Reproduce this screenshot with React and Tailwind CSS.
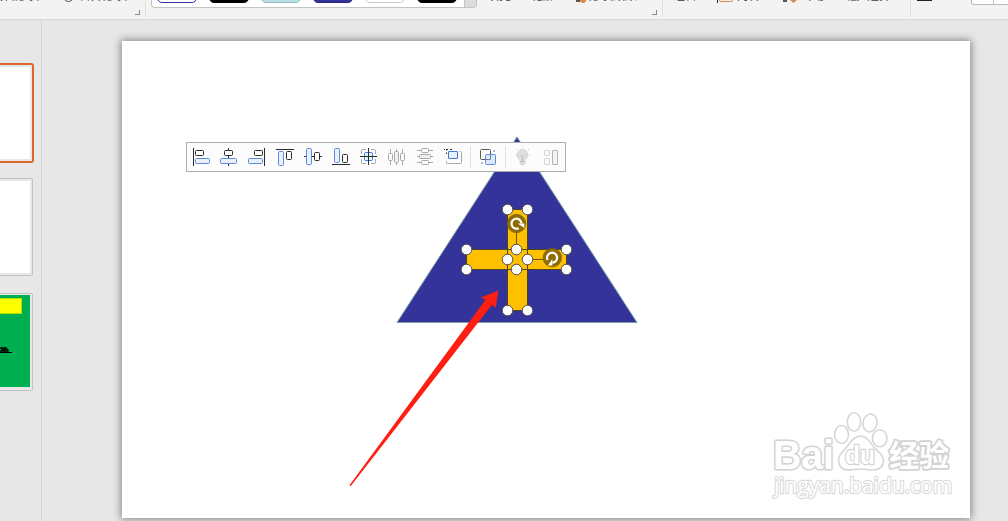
import React from 'react';
import { clsx } from 'clsx';

const DARK = '#2b2b2b';
const BLUE = '#5b8bd9';
const PALE = '#e8f0fb';
const GRAY = '#a8a8a8';

const swatches = [
  'bg-white border-[#333399]',
  'bg-black border-black',
  'bg-[#bbe0e3] border-[#94bcbf]',
  'bg-[#333399] border-[#262680]',
  'bg-white border-[#c8cac9]',
  'bg-black border-black',
];

const handles = [
  [507.5, 209.5], [527.5, 209.5],
  [466.5, 249.5], [566.5, 249.5],
  [466.5, 269.5], [566.5, 269.5],
  [507.5, 310.5], [527.5, 310.5],
  [516.5, 249.5], [516.5, 269.5],
  [507.5, 259.5], [527.5, 259.5],
];

// Rounded box given by its corner coordinates
function Box({ x1, y1, x2, y2, color = DARK, fill = 'none', r = 1 }) {
  return <rect x={x1} y={y1} width={x2 - x1} height={y2 - y1} rx={r} stroke={color} fill={fill} />;
}

const alignIcons = [
  {
    name: 'Align left',
    art: (
      <>
        <path d="M1.5 0v18" stroke={DARK} />
        <Box x1={3.5} y1={2.5} x2={11.5} y2={7.5} />
        <Box x1={3.5} y1={10.5} x2={17.5} y2={15.5} color={BLUE} fill={PALE} />
      </>
    ),
  },
  {
    name: 'Align center',
    art: (
      <>
        <path d="M8.5 0v2M8.5 8v2M8.5 16v2" stroke={DARK} />
        <Box x1={4.5} y1={2.5} x2={12.5} y2={7.5} />
        <Box x1={0.5} y1={10.5} x2={16.5} y2={15.5} color={BLUE} fill={PALE} />
      </>
    ),
  },
  {
    name: 'Align right',
    art: (
      <>
        <path d="M16.5 0v18" stroke={DARK} />
        <Box x1={6.5} y1={2.5} x2={14.5} y2={7.5} />
        <Box x1={0.5} y1={10.5} x2={14.5} y2={15.5} color={BLUE} fill={PALE} />
      </>
    ),
  },
  {
    name: 'Align top',
    art: (
      <>
        <path d="M0 1.5h18" stroke={DARK} />
        <Box x1={2.5} y1={3.5} x2={7.5} y2={17.5} color={BLUE} fill={PALE} />
        <Box x1={10.5} y1={3.5} x2={15.5} y2={11.5} />
      </>
    ),
  },
  {
    name: 'Align middle',
    art: (
      <>
        <path d="M0 8.5h2M8 8.5h2M16 8.5h2" stroke={DARK} />
        <Box x1={2.5} y1={0.5} x2={7.5} y2={16.5} color={BLUE} fill={PALE} />
        <Box x1={10.5} y1={4.5} x2={15.5} y2={12.5} />
      </>
    ),
  },
  {
    name: 'Align bottom',
    art: (
      <>
        <path d="M0 16.5h18" stroke={DARK} />
        <Box x1={2.5} y1={0.5} x2={7.5} y2={14.5} color={BLUE} fill={PALE} />
        <Box x1={10.5} y1={6.5} x2={15.5} y2={14.5} />
      </>
    ),
  },
  {
    name: 'Center both ways',
    art: (
      <>
        <path d="M1.5 6v-3.5q0-1 1-1H6M11 1.5h3.5q1 0 1 1V6M15.5 11v3.5q0 1-1 1H11M6 15.5H2.5q-1 0-1-1V11" stroke={GRAY} />
        <Box x1={4.5} y1={4.5} x2={12.5} y2={12.5} color="#3f7fe0" fill={PALE} />
        <path d="M8.5 0v17M0 8.5h17" stroke={DARK} />
      </>
    ),
  },
  {
    name: 'Distribute horizontally',
    art: (
      <>
        <path d="M2.5 1v4M2.5 13v4M8.5 1v2M8.5 15v2M14.5 1v4M14.5 13v4" stroke={GRAY} />
        <Box x1={0.5} y1={5.5} x2={4.5} y2={12.5} color={GRAY} />
        <Box x1={6.5} y1={3.5} x2={10.5} y2={14.5} color={GRAY} fill="#f0f0f0" />
        <Box x1={12.5} y1={5.5} x2={16.5} y2={12.5} color={GRAY} />
      </>
    ),
  },
  {
    name: 'Distribute vertically',
    art: (
      <>
        <path d="M1 2.5h4M13 2.5h4M1 8.5h2M15 8.5h2M1 14.5h4M13 14.5h4" stroke={GRAY} />
        <Box x1={5.5} y1={0.5} x2={12.5} y2={4.5} color={GRAY} />
        <Box x1={3.5} y1={6.5} x2={14.5} y2={10.5} color={GRAY} fill="#f0f0f0" />
        <Box x1={5.5} y1={12.5} x2={12.5} y2={16.5} color={GRAY} />
      </>
    ),
  },
  {
    name: 'Equal size',
    art: (
      <>
        <path d="M0 1.5h1M2 1.5h2M6 1.5h2M2.5 1v1.500M2.5 4.5v1.500" stroke={DARK} />
        <path d="M15.500 3.5h1q1 0 1 1v10q0 1-1 1H3.500q-1 0-1-1V13" stroke={GRAY} />
        <Box x1={4.5} y1={3.5} x2={13.5} y2={10.5} color="#3f78d2" fill={PALE} r={0.5} />
      </>
    ),
  },
];

const extraIcons = [
  {
    name: 'Tips',
    art: (
      <>
        <path
          d="M8.500 1.500a5.500 5.500 0 0 1 3.200 9.900c-.6.500-.7 1-.7 1.600v2.500l-1.500 1.500h-2L6 15.500V13c0-.6-.1-1.100-.7-1.600A5.500 5.500 0 0 1 8.500 1.500z"
          fill="#dedede"
          stroke="#cfcfcf"
          strokeWidth="0.8"
        />
        <path d="M6 13.500h5M6.500 7l2 2 2-2M8.500 9v4" stroke="#bdbdbd" />
        <path d="M2 1.500h1M14 1.500h1M1.500 7h.8M15 7h.8" stroke="#c8c8c8" />
      </>
    ),
  },
  {
    name: 'Layout',
    art: (
      <>
        <Box x1={2.5} y1={2.5} x2={7.5} y2={7.5} color="#d4d4d4" r={0.5} />
        <Box x1={2.5} y1={10.5} x2={7.5} y2={16.5} color="#d4d4d4" r={0.5} />
        <Box x1={10.5} y1={2.5} x2={15.5} y2={16.5} color="#b4b4b4" fill="#f3f3f3" r={0.5} />
      </>
    ),
  },
];

function ToolIcon({ name, art }) {
  return (
    <button type="button" title={name} className="h-[18px] w-[18px]">
      <svg width="18" height="18" viewBox="0 0 18 18" fill="none">
        {art}
      </svg>
    </button>
  );
}

function AlignToolbar() {
  return (
    <div className="absolute left-[64px] top-[101px] flex h-[30px] w-[380px] border border-[#adadad] bg-[#fcfcfc] p-[5px]">
      <div className="flex gap-[10px]">
        {alignIcons.map((icon) => (
          <ToolIcon key={icon.name} {...icon} />
        ))}
      </div>
      <div className="mx-2 -my-[2px] w-px shrink-0 bg-[#e0e0e0]" />
      <ToolIcon
        name="Group"
        art={
          <>
            <Box x1={1.5} y1={1.5} x2={11.5} y2={11.5} color="#5c5c5c" r={1} />
            <Box x1={6.5} y1={6.5} x2={16.5} y2={16.5} color={BLUE} fill="#dce9fb" r={1} />
            <path d="M6.500 11.500h5v-5" stroke="#6f7f95" />
            <path d="M14 3h2" stroke="#a9c3ec" strokeWidth="2" />
            <path d="M2 15h2" stroke="#bbb" strokeWidth="2" />
          </>
        }
      />
      <div className="mx-2 -my-[2px] w-px shrink-0 bg-[#e0e0e0]" />
      <div className="flex gap-[10px]">
        {extraIcons.map((icon) => (
          <ToolIcon key={icon.name} {...icon} />
        ))}
      </div>
    </div>
  );
}

function RotateHandle({ x, y, angle = 0 }) {
  return (
    <g transform={`translate(${x} ${y}) rotate(${angle})`} fill="none">
      <circle r="9.300" fill="#8f6c00" stroke="#7a5d10" strokeWidth="0.6" />
      <path d="M2.200 4.700A5 5 0 1 1 5 0" stroke="#fff" strokeWidth="2.200" />
      <path d="M1.200 0h6.600v4.500z" fill="#fff" />
    </g>
  );
}

const markTexts = [
  { text: '经验', x: 889, y: 466, size: 30, width: 60, family: 'Liberation Sans, Noto Sans CJK SC, sans-serif', bold: true, grow: 1.2 },
  { text: 'Bai', x: 773, y: 468.5, size: 41, width: 61, family: 'Liberation Sans, sans-serif', bold: true, grow: 0.8 },
  { text: 'du', x: 845, y: 464, size: 25, width: 30, family: 'Liberation Sans, sans-serif', bold: true, grow: 0 },
  { text: 'jingyan.baidu.com', x: 774, y: 492.5, size: 22, width: 178, family: 'Open Sans, sans-serif', bold: false, grow: 0 },
];

// White lettering with a soft gray rim
function OutlinedText({ text, x, y, size, width, family, bold, grow }) {
  return (
    <text
      x={x}
      y={y}
      fontSize={size}
      fontWeight={bold ? 'bold' : 'normal'}
      fontFamily={family}
      textLength={width}
      lengthAdjust="spacingAndGlyphs"
      stroke={bold ? '#d3d3d3' : '#dcdcdc'}
      strokeWidth={2.4 + grow}
    >
      {text}
    </text>
  );
}

function Watermark() {
  return (
    <g fill="#fff" stroke="#d6d6d6" strokeWidth="1.600" strokeLinejoin="round">
      <ellipse cx="841.500" cy="434.500" rx="7" ry="9" />
      <ellipse cx="854" cy="422" rx="6.700" ry="9.300" />
      <ellipse cx="870" cy="423" rx="7" ry="9" transform="rotate(12 870 423)" />
      <ellipse cx="879.700" cy="438.300" rx="7.300" ry="8.500" />
      <path d="M860.500 436c5.500 0 8.500 4.500 12 9.500 4 5.500 11 8 11 15.500 0 6-5 9-10.500 9-5 0-8-1-12.500-1s-8 1-12.500 1c-6 0-9.500-4-9.500-9.500 0-7 5.500-9.500 9.500-15 3.500-4.800 7-9.500 12.500-9.500z" />
      <g paintOrder="stroke">
        {markTexts.map((item) => (
          <OutlinedText key={item.text} {...item} />
        ))}
      </g>
    </g>
  );
}

function Slide() {
  return (
    <div className="relative h-[477px] w-[848px] bg-white shadow-[0_0_8px_1px_rgba(0,0,0,0.45)]">
      <svg className="block" width="848" height="477" viewBox="122 41 848 477">
        <path d="M517 137L637 322.500H397z" fill="#333399" stroke="#7c9caa" />
        <g fill="#ffc000" stroke="#4d4420">
          <rect x="466.500" y="249.500" width="100" height="20" />
          <rect x="507.500" y="209.500" width="20" height="101" />
          <path d="M507.500 249.500h20M507.500 269.500h20" />
        </g>
        <path d="M516.500 232v18" stroke="#6b5514" />
        <path d="M527 259.500h17" stroke="#6b5514" />
        {handles.map(([x, y]) => (
          <circle key={`${x}-${y}`} cx={x} cy={y} r="5.300" fill="#fff" stroke="#4a4a4a" />
        ))}
        <RotateHandle x={516.5} y={223.5} />
        <RotateHandle x={552.3} y={257.7} angle={90} />
        <path
          d="M498.300 290.500L480.500 297.700L485.700 299.500L349.500 485.300L350.600 486.200L492 304.700L495.700 307.700z"
          fill="#ff1f12"
        />
        <Watermark />
      </svg>
      <AlignToolbar />
    </div>
  );
}

function Label({ children, className }) {
  return <span className={clsx('-mt-[10px] h-3 shrink-0 whitespace-nowrap text-xs leading-3', className)}>{children}</span>;
}

function CornerMark() {
  return <i className="mb-1 h-[5px] w-[5px] self-end border-b border-r border-[#8a8a8a]" />;
}

function Ribbon() {
  return (
    <header className="flex h-5 shrink-0 items-start overflow-hidden border-b border-[#d9d9d9] bg-[#f3f3f3] text-[#3c3c3c]">
      <div className="flex h-[17px] w-[146px] shrink-0 border-r border-[#dedede]">
        <Label className="-ml-[9px]">编辑形状</Label>
        <span className="-mt-[9px] ml-[24px] h-[11px] w-[11px] rounded-full border border-[#555]" />
        <Label className="ml-[5px]">合并形状</Label>
        <span className="flex-1" />
        <div className="mr-[5px] flex h-[19px]"><CornerMark /></div>
      </div>

      <div className="ml-[5px] flex h-2 w-[326px] shrink-0 overflow-hidden rounded-b-[4px] border border-t-0 border-[#c3c3c3] bg-white pl-[5px]">
        <div className="flex flex-1 gap-3">
          {swatches.map((color, i) => (
            <span key={i} className={clsx('-mt-[17px] h-5 w-10 shrink-0 rounded-[5px] border', color)} />
          ))}
        </div>
        <span className="w-3 shrink-0 border-l border-[#c3c3c3] bg-[#dcdcdc]" />
      </div>

      <div className="flex h-[17px] w-[186px] shrink-0 border-r border-[#dedede]">
        <Label className="ml-[10px]">填充</Label>
        <Label className="ml-[20px]">轮廓</Label>
        <span className="ml-[21px] mt-0 h-[2px] w-[4px] bg-[#555]" />
        <span className="h-[3px] w-[6px] rounded-b-full bg-[#d98a4a]" />
        <Label className="ml-[3px]">形状效果</Label>
        <span className="flex-1" />
        <div className="mr-[5px] flex h-[19px]"><CornerMark /></div>
      </div>

      <div className="flex h-[17px] w-[248px] shrink-0 border-r border-[#dedede]">
        <Label className="ml-[10px]">组合</Label>
        <span className="ml-[20px] h-[3px] w-px bg-[#222]" />
        <span className="-mt-[6px] ml-px h-2 w-[14px] rounded-[2px] border border-[#d98a4a]" />
        <Label className="ml-[4px]">对齐</Label>
        <span className="ml-[22px] h-[2px] w-[4px] bg-[#555]" />
        <svg className="ml-[3px]" width="7" height="3" viewBox="0 0 7 3">
          <path d="M0 0h7L3.500 3z" fill="#d98a4a" />
        </svg>
        <Label className="ml-[7px]">下移</Label>
        <Label className="ml-[8px]">一层</Label>
        <Label className="-ml-[1px] pl-2">选择</Label>
      </div>

      <span className="ml-[6px] h-px w-[15px] shrink-0 bg-[#222]" />
      <div className="ml-[39px] flex h-[5px] w-12 shrink-0 rounded-bl-[3px] border border-t-0 border-[#b9b9b9] bg-white">
        <span className="w-[22px] border-r border-[#c3c3c3]" />
      </div>
    </header>
  );
}

function Thumbnails() {
  return (
    <aside className="w-[42px] shrink-0 overflow-hidden border-r border-[#d2d2d2] pt-[43px]">
      <div className="h-[100px] w-[34px] rounded-r-[3px] border-2 border-l-0 border-[#d9682b] py-[2px] pr-[2px]">
        <div className="h-full bg-white" />
      </div>
      <div className="mt-[15px] h-[98px] w-[33px] rounded-r-[2px] border border-l-0 border-[#c2c2c2] py-[2px] pr-[2px]">
        <div className="h-full bg-white" />
      </div>
      <div className="mt-[17px] h-[98px] w-[33px] rounded-r-[2px] border border-l-0 border-[#c2c2c2] pb-[3px] pr-[2px] pt-px">
        <div className="h-full bg-[#00b050] pt-[3px]">
          <div className="h-4 w-[22px] border border-l-0 border-[#b0e000] bg-[#ffff00]" />
          <svg className="mt-8" width="14" height="8" viewBox="0 0 14 8">
            <path d="M0 2.500l2-1 1 2 2-2 2 1.500 1.500 2M0 5h8.500M2 3.500v2M5 2.500v3" fill="none" stroke="#000" strokeWidth="1.400" />
            <path d="M0 6.500h12" stroke="#000" />
          </svg>
        </div>
      </div>
    </aside>
  );
}

export default function App() {
  return (
    <div className="flex h-[521px] w-[1008px] flex-col overflow-hidden bg-[#e7e7e7] font-['Liberation_Sans','Noto_Sans_CJK_SC',sans-serif]">
      <Ribbon />
      <div className="flex min-h-0 flex-1">
        <Thumbnails />
        <main className="flex-1 overflow-hidden pl-20 pt-[21px]">
          <Slide />
        </main>
      </div>
    </div>
  );
}
